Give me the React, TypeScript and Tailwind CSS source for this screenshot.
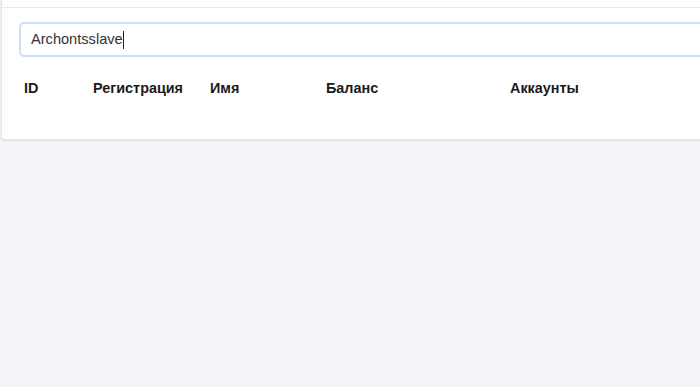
import React from "react";

export default function App() {
  return (
    <div
      className="w-[700px] h-[387px] overflow-hidden bg-[#f4f5f9]"
      style={{ fontFamily: '"Liberation Sans", Arial, sans-serif' }}
    >
      <div className="ml-[1px] w-[760px] bg-white border-l border-b border-[#e2e4e8] rounded-bl-[4px] shadow-[0_1px_2px_rgba(0,0,0,0.08)]">
        <div className="h-[8px] border-b border-[#e8e9ec]" />
        <div className="pl-[17px] pt-[14px] pb-[42px]">
          <div className="h-[35px] w-[720px] border-2 border-[#cddffa] rounded-[5px] flex items-center pl-[10px] text-[14.6px] text-[#333]">
            <span>Archontsslave</span>
            <span className="inline-block w-[1px] h-[18px] bg-[#222]" />
          </div>
          <div className="mt-[22px] flex text-[14.4px] font-bold text-[#1a1a1a] leading-[18px]">
            <div className="w-[74px] pl-[5px]">ID</div>
            <div className="w-[117px]">Регистрация</div>
            <div className="w-[116px]">Имя</div>
            <div className="w-[184px]">Баланс</div>
            <div>Аккаунты</div>
          </div>
        </div>
      </div>
    </div>
  );
}
